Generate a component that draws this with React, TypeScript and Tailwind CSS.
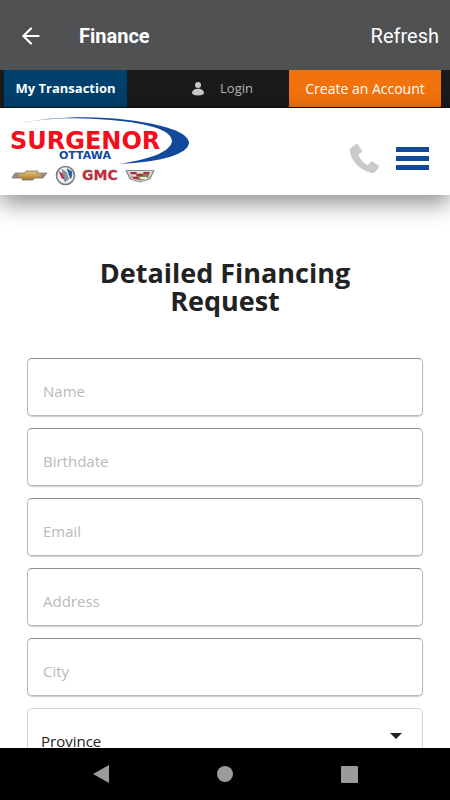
import React from 'react';
import { ArrowLeft } from 'lucide-react';

const FIELDS = ['Name', 'Birthdate', 'Email', 'Address', 'City'];

const DealerLogo: React.FC = () => (
  <svg viewBox="0 108 200 87" className="w-[200px] h-[87px] shrink-0" role="img" aria-label="Surgenor Ottawa">
    <defs>
      <linearGradient id="gold" x1="0" y1="0" x2="0" y2="1">
        <stop offset="0" stopColor="#e6c67c" />
        <stop offset="1" stopColor="#a87628" />
      </linearGradient>
    </defs>
    <path
      d="M20 123C48 117 92 115 128 120C162 124 189 132 189 143C188 154 162 162 118 164C148 160 171 152 172 141C172 128 137 121 96 119C68 117 42 119 20 123Z"
      fill="#12499a"
    />
    <text x="10" y="149" fontSize="24" fontWeight="bold" fill="#f40d1b" className="font-['DejaVu_Sans']">SURGENOR</text>
    <text x="59" y="159" fontSize="11" fontWeight="bold" fill="#12499a" className="font-['DejaVu_Sans']">OTTAWA</text>

    {/* Chevrolet */}
    <path d="M15 173H25L26 171H38L37 173H47L43 178H34L33 180H22L23 178H12Z" fill="url(#gold)" stroke="#777168" strokeWidth="0.8" />
    <path d="M15 173.5H20L17 177.5H12.5ZM42 173.5H46.500L43 177.500H40Z" fill="#8b8b86" />

    {/* Buick */}
    <circle cx="65.500" cy="175.500" r="9" fill="#eef0f2" stroke="#777b82" strokeWidth="1.600" />
    <path d="M58.500 171L62.500 173.500L65 180L61.500 178Z" fill="#c22a3c" />
    <path d="M62 169.500L66 172L68.500 179L65 182L63.500 176Z" fill="#8b939e" stroke="#555e6a" strokeWidth="0.5" />
    <path d="M67 168.500L72 171.500V176L70.500 179L68.500 174Z" fill="#1f66a8" stroke="#5e6875" strokeWidth="0.4" />

    <text x="82" y="180" fontSize="14" fontWeight="bold" fill="#c92c38" stroke="#8a4a50" strokeWidth="0.3" className="font-['DejaVu_Sans']">GMC</text>

    {/* Cadillac */}
    <path d="M126 170.500H154L150 179L140 182L130 179Z" fill="#d4d6d7" stroke="#8b8e90" strokeWidth="1" />
    <path d="M130 172H150L148 178L140 180.500L132 178Z" fill="#8e7d65" />
    <path d="M131 172H136V174H131ZM137 174H143V176H137ZM144 172H149V174H144ZM133 177H138V179H134Z" fill="#b32c3c" />
    <path d="M137 171.500H143V173.500H137ZM131 174.500H136V176.500H132ZM140 177H147V179H140Z" fill="#f0e7cf" />
    <path d="M126 171L131 179M154 171L149 179" stroke="#77797b" strokeWidth="0.8" />
  </svg>
);

const App: React.FC = () => {
  return (
    <div className="h-screen flex flex-col overflow-hidden bg-white font-['Open_Sans',sans-serif]">
      {/* App bar */}
      <header className="h-[70px] shrink-0 flex items-center bg-[#505153] pl-[18px] pr-[11px] pt-[2px] text-white text-xl font-['Roboto',sans-serif]">
        <button aria-label="Back" className="mr-[35px]">
          <ArrowLeft className="w-[26px] h-[26px]" strokeWidth={2} />
        </button>
        <h1 className="font-bold">Finance</h1>
        <button className="ml-auto">Refresh</button>
      </header>

      {/* Account bar */}
      <nav className="h-[38px] shrink-0 flex bg-[#1a1a1a] pl-1 pr-[9px] text-[13px] border-b border-[#101010]">
        <a href="#transaction" className="w-[123px] flex items-center justify-center bg-[#00406c] text-white font-bold">
          My Transaction
        </a>
        <a href="#login" className="flex-1 flex items-center justify-end gap-4 pr-9 text-[#b5b5b5]">
          <svg viewBox="0 0 12 14" className="w-3 h-[14px]" fill="#c9c9c9" aria-hidden="true">
            <circle cx="6" cy="3" r="3" />
            <path d="M6 6.800C2.500 6.800 0 8.700 0 10.800C0 12.400 2 13.500 6 13.500S12 12.400 12 10.800C12 8.700 9.500 6.800 6 6.800Z" />
          </svg>
          Login
        </a>
        <a href="#register" className="w-[152px] flex items-center justify-center bg-[#f2720c] text-white text-sm">
          Create an Account
        </a>
      </nav>

      {/* Dealer header */}
      <div className="relative h-[87px] shrink-0 flex items-center bg-white shadow-[0_8px_22px_rgba(0,0,0,0.45)]">
        <DealerLogo />
        <div className="ml-auto flex items-center gap-4 pr-[21px] pt-[13px]">
          <a href="#call" aria-label="Call us">
            <svg viewBox="0 0 32 32" className="w-[31px] h-[31px]" fill="#cacaca" aria-hidden="true">
              <path d="M2 5L6.500 1.500C7.500 .8 8.600 1 9.300 1.900L13 7C13.700 8 13.600 9 12.600 9.800L9.800 12.200C11 16.500 15 20.800 19.500 22.700L22.200 19.800C23 18.900 24 18.800 25 19.500L30 23C31 23.700 31.200 24.700 30.500 25.700L27 29.800C26 31 24.500 31.200 23 30.800C11 28 2.500 19 .9 8.800C.7 7.200 .9 6 2 5Z" />
            </svg>
          </a>
          <button aria-label="Menu" className="w-[33px] flex flex-col gap-1">
            <span className="h-[5px] bg-[#12499a]" />
            <span className="h-[5px] bg-[#12499a]" />
            <span className="h-[5px] bg-[#12499a]" />
          </button>
        </div>
      </div>

      <main className="flex-1 min-h-0 overflow-hidden px-[27px] pt-16">
        <h2 className="max-w-[300px] mx-auto text-center text-[27px] leading-7 font-bold text-[#222]">
          Detailed Financing Request
        </h2>
        <form className="mt-[43px] flex flex-col gap-3">
          {FIELDS.map((field) => (
            <input
              key={field}
              type="text"
              aria-label={field}
              placeholder={field}
              className="w-full h-[58px] shrink-0 rounded-[5px] border border-[#b8b8b8] border-t-[#8c8c8c] px-[15px] pt-2 text-[15px] placeholder:text-[#b9b9b9] shadow-[0_1px_1px_rgba(0,0,0,0.2)]"
            />
          ))}
          <div className="relative">
            <select
              aria-label="Province"
              className="w-full h-[58px] appearance-none rounded-[5px] border border-[#d3d3d3] bg-white px-[13px] pt-2 text-[15px] text-[#222]"
            >
              <option>Province</option>
            </select>
            <svg viewBox="0 0 12 6" className="absolute right-[21px] top-[25px] w-3 h-[6px] pointer-events-none" aria-hidden="true">
              <path d="M0 0H12L6 6Z" fill="#222" />
            </svg>
          </div>
        </form>
      </main>

      {/* System navigation */}
      <footer className="h-[52px] shrink-0 flex items-center justify-center gap-[108px] bg-black">
        <button aria-label="Go back">
          <svg viewBox="0 0 16 18" className="w-4 h-[18px]" fill="#9b9b9b">
            <path d="M16 0V18L0 9Z" />
          </svg>
        </button>
        <button aria-label="Home" className="w-4 h-4 rounded-full bg-[#9b9b9b]" />
        <button aria-label="Recent apps" className="w-[17px] h-[17px] rounded-[1px] bg-[#9b9b9b]" />
      </footer>
    </div>
  );
};

export default App;
